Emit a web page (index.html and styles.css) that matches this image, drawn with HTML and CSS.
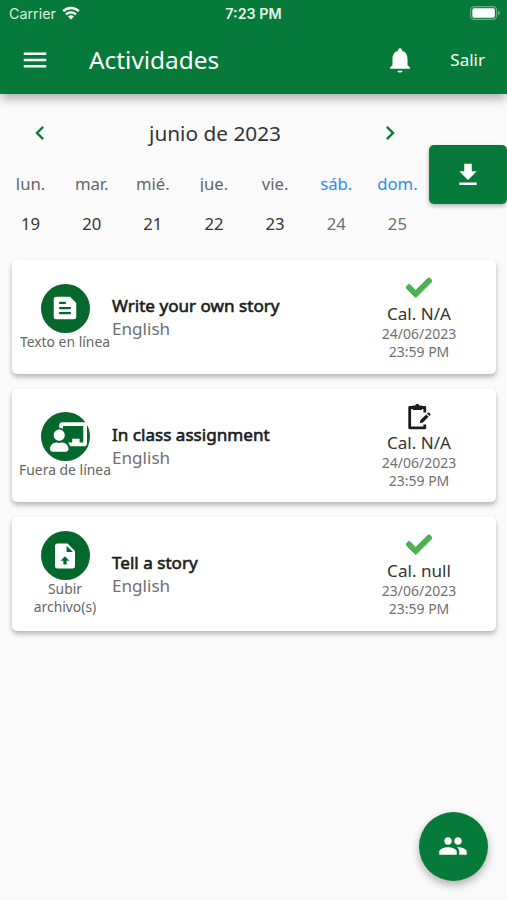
FILE: index.html
```
<!DOCTYPE html>
<html lang="es">
<head>
    <meta charset="UTF-8">
    <meta name="viewport" content="width=device-width, initial-scale=1.0">
    <title>Actividades</title>
    <link rel="stylesheet" href="styles.css">
</head>
<body>
    <header class="header">
        <div class="status-bar">
            <div class="carrier">
                <span>Carrier</span>
                <svg class="wifi" viewBox="0 0 18 14">
                    <path d="M1.2 5.2a11.2 11.2 0 0 1 15.6 0" fill="none" stroke="#fff" stroke-width="2.5"/>
                    <path d="M4 8.3a7.2 7.2 0 0 1 10 0" fill="none" stroke="#fff" stroke-width="2.3"/>
                    <path d="M6 10.6a4.3 4.3 0 0 1 6 0L9 13.6z" fill="#fff"/>
                </svg>
            </div>
            <div class="clock">7:23 PM</div>
            <svg class="battery" viewBox="0 0 30 14">
                <rect x="0.6" y="0.6" width="26" height="12.8" rx="3.6" fill="none" stroke="#fff" stroke-opacity="0.4" stroke-width="1.1"/>
                <rect x="2.3" y="2.3" width="22.6" height="9.4" rx="1.6" fill="#fff"/>
                <path d="M28 4.8q1.8 .6 1.8 2.2T28 9.2z" fill="#fff" fill-opacity="0.45"/>
            </svg>
        </div>
        <div class="toolbar">
            <svg class="icon" viewBox="0 0 24 24"><path d="M3 18h18v-2H3v2zm0-5h18v-2H3v2zm0-7v2h18V6H3z"/></svg>
            <h1>Actividades</h1>
            <svg class="icon bell" viewBox="0 0 24 24"><path d="M12 22c1.1 0 2-.6 2-1.5h-4c0 .9.9 1.5 2 1.5zm6-6v-5c0-3.07-1.64-5.64-4.5-6.32V4c0-.83-.67-1.5-1.5-1.5s-1.5.67-1.5 1.5v.68C7.63 5.36 6 7.92 6 11v5l-2 2v1h16v-1l-2-2z"/></svg>
            <a class="logout">Salir</a>
        </div>
    </header>

    <section class="calendar-row">
        <div class="calendar">
            <div class="month">
                <svg class="arrow" viewBox="0 0 24 24"><path d="M15.41 7.41L14 6l-6 6 6 6 1.41-1.41L10.83 12z"/></svg>
                <span>junio de 2023</span>
                <svg class="arrow" viewBox="0 0 24 24"><path d="M10 6L8.59 7.41 13.17 12l-4.58 4.59L10 18l6-6z"/></svg>
            </div>
            <div class="week names">
                <span>lun.</span>
                <span>mar.</span>
                <span>mié.</span>
                <span>jue.</span>
                <span>vie.</span>
                <span class="weekend">sáb.</span>
                <span class="weekend">dom.</span>
            </div>
            <div class="week days">
                <span>19</span>
                <span>20</span>
                <span>21</span>
                <span>22</span>
                <span>23</span>
                <span class="off">24</span>
                <span class="off">25</span>
            </div>
        </div>
        <button class="download">
            <svg class="icon" viewBox="0 0 24 24"><path d="M19 9h-4V3H9v6H5l7 7 7-7zM5 18v2h14v-2H5z"/></svg>
        </button>
    </section>

    <main class="list">
        <article class="card">
            <div class="type">
                <div class="circle">
                    <svg class="icon" viewBox="0 0 24 24"><path fill-rule="evenodd" d="M16 3H5a2 2 0 0 0-2 2v14a2 2 0 0 0 2 2h14a2 2 0 0 0 2-2V8zM8 7h4a.9.9 0 0 1 0 1.8H8A.9.9 0 0 1 8 7zM8 11.1h8a.9.9 0 0 1 0 1.8H8a.9.9 0 0 1 0-1.8zM8 15.2h8a.9.9 0 0 1 0 1.8H8a.9.9 0 0 1 0-1.8z"/></svg>
                </div>
                <span>Texto en línea</span>
            </div>
            <div class="info">
                <h2>Write your own story</h2>
                <p>English</p>
            </div>
            <div class="grade">
                <svg class="check" viewBox="0 0 512 512"><path d="M173.9 439.4L7.5 273c-10-10-10-26.200 0-36.200l36.200-36.200c10-10 26.200-10 36.200 0L192 312.700 432.100 72.600c10-10 26.200-10 36.200 0l36.200 36.200c10 10 10 26.200 0 36.200L210.100 439.400c-10 10-26.200 10-36.200 0z"/></svg>
                <strong>Cal. N/A</strong>
                <span>24/06/2023</span>
                <span>23:59 PM</span>
            </div>
        </article>

        <article class="card">
            <div class="type">
                <div class="circle">
                    <svg class="icon teacher" viewBox="0 0 640 512"><path d="M208 352c-2.390 0-4.780.35-7.060 1.090C187.980 357.300 174.350 360 160 360c-14.350 0-27.980-2.700-40.950-6.910-2.280-.74-4.660-1.090-7.050-1.090C49.940 352-.33 402.480 0 464.620.14 490.880 21.730 512 48 512h224c26.270 0 47.860-21.120 48-47.380.33-62.140-49.940-112.620-112-112.620zm-48-32c53.020 0 96-42.980 96-96s-42.980-96-96-96-96 42.980-96 96 42.980 96 96 96zM592 0H208c-26.470 0-48 22.250-48 49.590V96c23.420 0 45.100 6.780 64 17.800V64h352v288h-64v-64H384v64h-76.240c19.100 16.690 33.120 38.730 39.690 64H592c26.470 0 48-22.250 48-49.590V49.590C640 22.250 618.470 0 592 0z"/></svg>
                </div>
                <span>Fuera de línea</span>
            </div>
            <div class="info">
                <h2>In class assignment</h2>
                <p>English</p>
            </div>
            <div class="grade">
                <svg class="clipboard" viewBox="0 0 24 27">
                    <path d="M17.8 9.500V4.500H2.700v20.300h15.100v-3.300" fill="none" stroke="#1c1c1c" stroke-width="2.8" stroke-linejoin="round"/>
                    <path d="M5.8 7V2.500h2.400a2.200 2 0 0 1 4.200 0h2.500V7z"/>
                    <path d="M12.700 20.300l.8-3.200 5.700-5.700 2.400 2.400-5.700 5.700zM20 10.600l1-1q.5-.4 1 0l1.400 1.400q.4.500 0 1l-1 1z"/>
                </svg>
                <strong>Cal. N/A</strong>
                <span>24/06/2023</span>
                <span>23:59 PM</span>
            </div>
        </article>

        <article class="card">
            <div class="type">
                <div class="circle">
                    <svg class="icon" viewBox="0 0 24 24"><path fill-rule="evenodd" d="M14 2H6a2 2 0 0 0-2 2v16a2 2 0 0 0 2 2h12a2 2 0 0 0 2-2V8zM13.300 3.700L18.300 8.700H13.300zM12 12.200l3.500 3.500h-2.200v3.100h-2.600v-3.100H8.500z"/></svg>
                </div>
                <span>Subir archivo(s)</span>
            </div>
            <div class="info">
                <h2>Tell a story</h2>
                <p>English</p>
            </div>
            <div class="grade">
                <svg class="check" viewBox="0 0 512 512"><path d="M173.9 439.4L7.5 273c-10-10-10-26.200 0-36.200l36.200-36.200c10-10 26.200-10 36.200 0L192 312.700 432.100 72.600c10-10 26.200-10 36.200 0l36.200 36.200c10 10 10 26.200 0 36.200L210.100 439.400c-10 10-26.200 10-36.200 0z"/></svg>
                <strong>Cal. null</strong>
                <span>23/06/2023</span>
                <span>23:59 PM</span>
            </div>
        </article>
    </main>

    <button class="fab">
        <svg class="icon" viewBox="0 0 24 24"><path d="M16 11c1.66 0 2.99-1.34 2.99-3S17.66 5 16 5c-1.66 0-3 1.34-3 3s1.34 3 3 3zm-8 0c1.66 0 2.99-1.34 2.99-3S9.66 5 8 5C6.34 5 5 6.34 5 8s1.34 3 3 3zm0 2c-2.33 0-7 1.17-7 3.5V19h14v-2.5c0-2.33-4.67-3.5-7-3.5zm8 0c-.29 0-.62.02-.97.05 1.16.84 1.97 1.97 1.97 3.45V19h6v-2.5c0-2.33-4.67-3.5-7-3.5z"/></svg>
    </button>
</body>
</html>
```
FILE: styles.css
```
* {
    box-sizing: border-box;
}
body {
    margin: 0;
    min-height: 900px;
    background-color: #fafafa;
    color: #333;
    font-family: "Noto Sans", sans-serif;
}
h1, h2, p {
    margin: 0;
    font-weight: 400;
}
button {
    border: none;
    padding: 0;
    display: flex;
    align-items: center;
    justify-content: center;
    background-color: #067a38;
}
.icon {
    width: 30px;
    height: 30px;
    fill: #fff;
    flex: none;
}

/* header */
.header {
    height: 94px;
    background-color: #067a38;
    color: #fff;
    box-shadow: 0 6px 10px -1px rgba(0, 0, 0, 0.3);
}
.status-bar {
    display: grid;
    grid-template-columns: 1fr auto 1fr;
    align-items: center;
    height: 26px;
    padding: 0 7px 0 9px;
    font-family: Inter, sans-serif;
    font-size: 14.3px;
}
.carrier {
    display: flex;
    align-items: center;
    gap: 6px;
    color: #d9f0e0;
}
.wifi {
    width: 18px;
    height: 14px;
}
.clock {
    margin-left: -2px;
    font-weight: 600;
    color: #e8f7ec;
}
.battery {
    width: 30px;
    height: 14px;
    justify-self: end;
}
.toolbar {
    display: flex;
    align-items: center;
    height: 67px;
    padding: 0 22px 0 20px;
}
.toolbar h1 {
    flex: 1;
    margin-left: 39px;
    font-size: 24.4px;
}
.bell {
    margin-right: 35px;
}
.logout {
    font-size: 17px;
}

/* calendar */
.calendar-row {
    display: flex;
    height: 166.4px;
}
.calendar {
    width: 429px;
    flex: none;
    padding-top: 24px;
}
.month {
    display: flex;
    align-items: center;
    justify-content: space-between;
    height: 30px;
    padding: 0 25px 0 26px;
    font-size: 20.8px;
}
.arrow {
    width: 28px;
    height: 28px;
    fill: #067a38;
}
.week {
    display: grid;
    grid-template-columns: repeat(7, 61.15px);
    text-align: center;
}
.names {
    margin-top: 24px;
    height: 20px;
    line-height: 24px;
    font-size: 16.7px;
    color: #666;
    overflow: hidden;
}
.names .weekend {
    color: #2c8ee8;
}
.days {
    margin-top: 20px;
    line-height: 24px;
    font-size: 16.7px;
}
.days .off {
    color: #707070;
}
.download {
    width: 78px;
    height: 59px;
    margin-top: 51px;
    border-radius: 5px;
    box-shadow: 0 2px 4px rgba(0, 0, 0, 0.3);
}

/* activities */
.list {
    display: flex;
    flex-direction: column;
    gap: 14.8px;
    padding: 0 11px 0 12px;
}
.card {
    display: flex;
    align-items: center;
    height: 113.6px;
    padding: 0 22px 0 6px;
    background-color: #fff;
    border-radius: 5px;
    box-shadow: 0 3px 5px rgba(0, 0, 0, 0.28);
}
.type {
    width: 94px;
    display: flex;
    flex-direction: column;
    align-items: center;
    font-size: 13.9px;
    line-height: 18px;
    text-align: center;
    color: #666;
}
.circle {
    width: 49px;
    height: 49px;
    display: flex;
    align-items: center;
    justify-content: center;
    border-radius: 50%;
    background-color: #04682c;
}
.teacher {
    width: 37px;
    margin-left: 6px;
}
.info {
    flex: 1;
    font-size: 17.1px;
    line-height: 23px;
    color: #707070;
}
.info h2 {
    font-size: 17.1px;
    color: #1c1c1c;
    -webkit-text-stroke: 0.6px #1c1c1c;
}
.grade {
    width: 110px;
    display: flex;
    flex-direction: column;
    align-items: center;
    font-size: 14px;
    line-height: 18px;
    color: #707070;
}
.grade strong {
    font-size: 17.1px;
    font-weight: 400;
    line-height: 23px;
    color: #333;
}
.check {
    width: 26px;
    height: 29px;
    fill: #4caf50;
    stroke: #4caf50;
    stroke-width: 18px;
}
.clipboard {
    width: 24px;
    height: 27px;
    margin: 1.5px 0 0.5px;
    fill: #1c1c1c;
}

/* floating button */
.fab {
    position: fixed;
    right: 19.5px;
    bottom: 19.5px;
    width: 69px;
    height: 69px;
    border-radius: 50%;
    box-shadow: 0 4px 9px rgba(0, 0, 0, 0.3);
}
```
